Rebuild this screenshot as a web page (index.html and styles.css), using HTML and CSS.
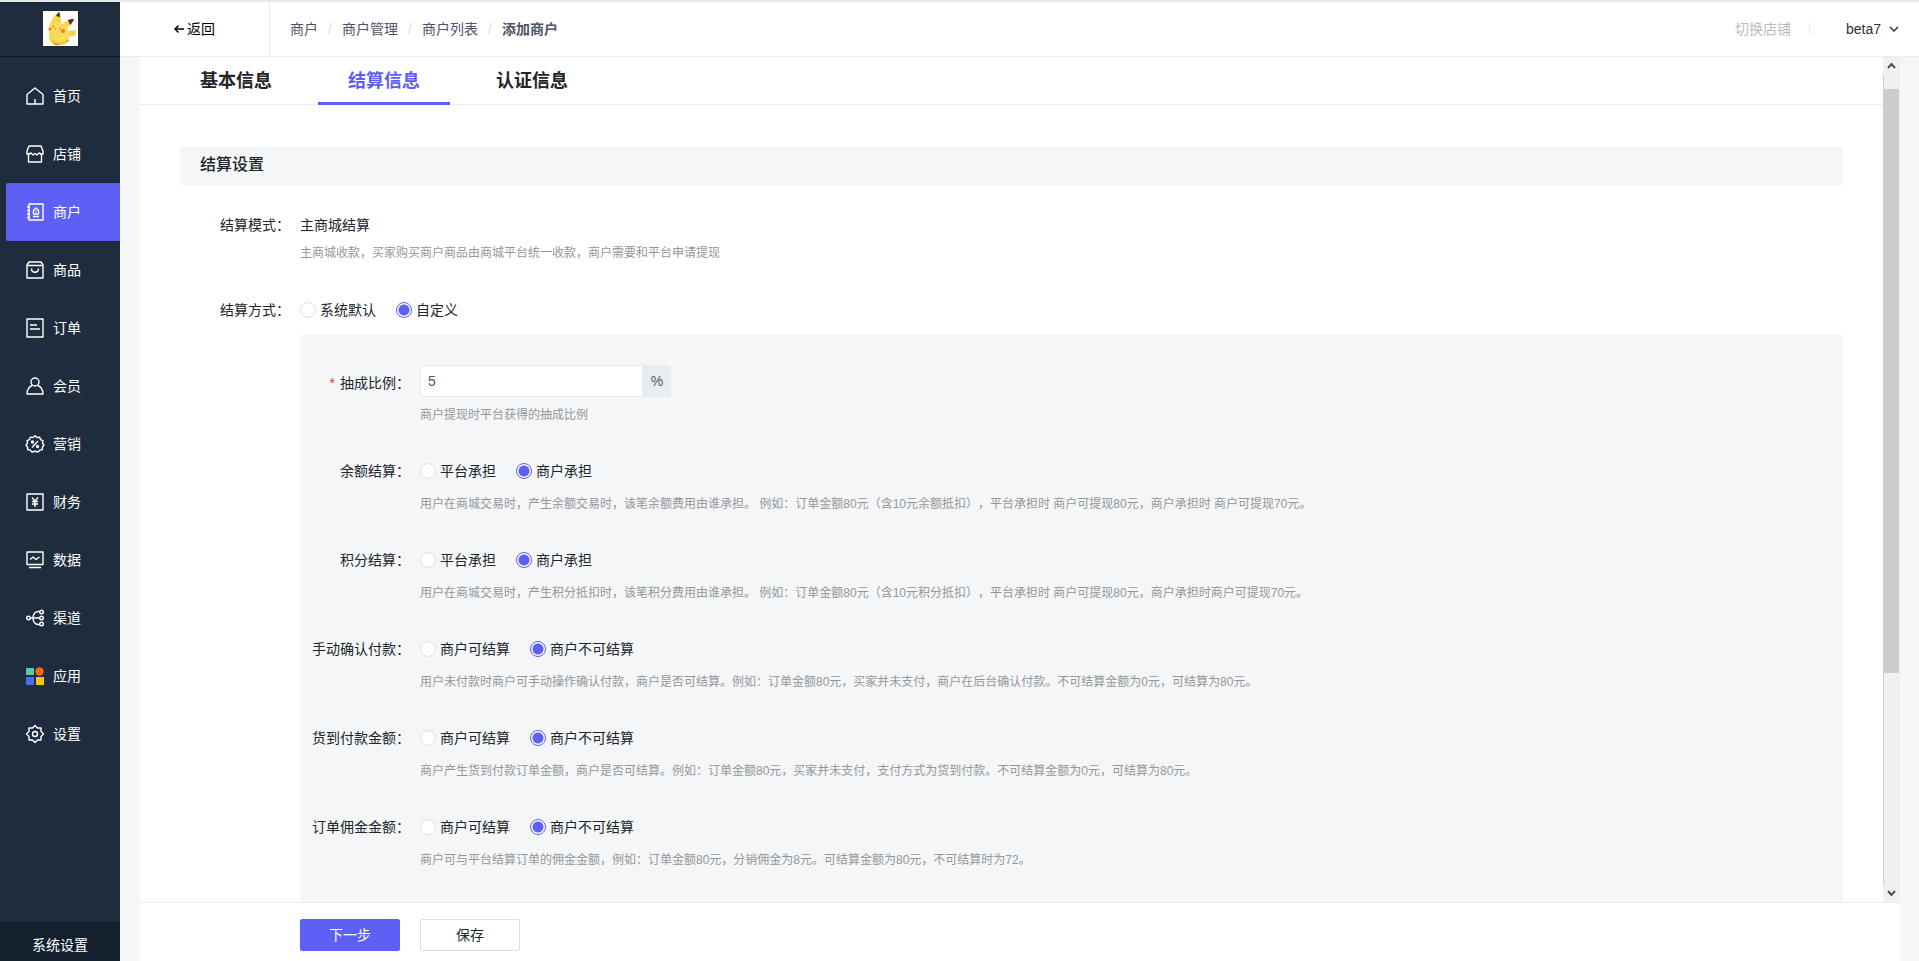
FILE: index.html
```html
<!DOCTYPE html>
<html lang="zh-CN">
<head>
<meta charset="utf-8">
<title>添加商户</title>
<link rel="stylesheet" href="styles.css">
</head>
<body>
<div class="app">
  <aside class="sidebar">
    <div class="logo">
      <svg viewBox="0 0 35 35" width="35" height="35" role="img" aria-label="logo">
        <rect width="35" height="35" fill="#fdfbf3"/>
        <path d="M24 22l4-3 5 1-1 5-6 0z" fill="#f3d34a"/>
        <path d="M7 14C9 8 12 3 16 1c2 4 2 8 2 12z" fill="#f5d54c"/>
        <path d="M13 5C14 3 15 2 16 1c1 2 1 3 1 5z" fill="#4a3026"/>
        <path d="M18 15c3-4 8-7 13-7-2 5-6 9-10 10z" fill="#f5d54c"/>
        <path d="M25 9c2-1 4-1 6-1-1 3-3 5-4 6z" fill="#4a3026"/>
        <path d="M7 14c3-4 9-4 14 0 4 3 6 8 5 13-1 5-6 7-11 7S6 31 6 26c0-3 1-4 0-7-1-2 0-4 1-5z" fill="#f8da55"/>
        <path d="M8 27c3 5 10 6 16 3-1 3-5 4-9 4-4 0-7-2-7-7z" fill="#eebc3c"/>
        <circle cx="7" cy="18" r="1.500" fill="#ec7a3b"/><circle cx="20" cy="20" r="2" fill="#ec7a3b"/>
        <path d="M9 15l2 1M16 17l2 1M12 18h1M11 33l4 1M23 31l3-2" stroke="#b98433" fill="none"/>
      </svg>
    </div>
    <nav class="nav">
      <a class="nav-item" href="#"><svg class="icon" viewBox="0 0 18 18"><path d="M1 7.500 9 1l8 6.500V17H1zM9 12v5"/></svg>首页</a>
      <a class="nav-item" href="#"><svg class="icon" viewBox="0 0 18 18"><path d="M3 1h12l2 5v3h-2l-2-1-2 2-2-1.500L7 10 5 8 3 9H1V6zM2.500 9.500V17h13V9.500"/></svg>店铺</a>
      <a class="nav-item active" href="#"><svg class="icon" viewBox="0 0 18 18"><path d="M3 1h14v16H3zM1 4h3M1 7.500h3M1 11h3M1 14.500h3M7 13.500h6M7.500 11V7.500L10 5l2.500 2.500V11zM9.500 8.500h1"/></svg>商户</a>
      <a class="nav-item" href="#"><svg class="icon" viewBox="0 0 18 18"><path d="M1 4v13h16V4l-2-3H3zM1 4.500h16M5.500 7.500c0 5 7 5 7 0"/></svg>商品</a>
      <a class="nav-item" href="#"><svg class="icon" viewBox="0 0 18 18"><path d="M1 0h16v18H1zM4 6h7M4 10h10"/></svg>订单</a>
      <a class="nav-item" href="#"><svg class="icon" viewBox="0 0 18 18"><circle cx="9" cy="5" r="4"/><path d="M6 8.500C3 10 1 13 1 17h16c0-4-2-7-5-8.500"/></svg>会员</a>
      <a class="nav-item" href="#"><svg class="icon" viewBox="0 0 18 18"><path d="M9 .8l2 1.700 2.600-.4.900 2.500 2.400 1-.4 2.500L18 10l-1.500 2-.1 2.500-2.500.6L12 17l-3-.8L6 17l-1.900-1.900-2.500-.6-.1-2.500L0 10l1.500-1.900-.4-2.500 2.400-1 .9-2.500 2.600.4z"/><path d="M12 6l-6 6.500"/><circle cx="6.500" cy="7" r="1"/><circle cx="11.500" cy="11.500" r="1"/></svg>营销</a>
      <a class="nav-item" href="#"><svg class="icon" viewBox="0 0 18 18"><path d="M1 1h16v16H1zM6 4.500 9 8l3-3.500M9 8v6M6 8.500h6M6 11h6"/></svg>财务</a>
      <a class="nav-item" href="#"><svg class="icon" viewBox="0 0 18 18"><path d="M1 1h16v12.500H1zM4 8.500 7 6l3 2.500L13.500 6M3 16.500h12"/></svg>数据</a>
      <a class="nav-item" href="#"><svg class="icon" viewBox="0 0 18 18"><circle cx="2.500" cy="9" r="1.800"/><circle cx="15.500" cy="3" r="1.800"/><circle cx="15.500" cy="9" r="1.800"/><circle cx="15.500" cy="15" r="1.800"/><path d="M4.300 9h9.400M13.700 2.500C9.500 2 7 5 7 9s2.500 7 6.700 6.500"/></svg>渠道</a>
      <a class="nav-item" href="#"><svg class="icon-apps" viewBox="0 0 18 18"><path fill="#4cd0a4" d="M0 1h8v7H0z"/><circle fill="#f66a0a" cx="13.500" cy="4.500" r="4.200"/><path fill="#4d6bfa" d="M0 10h8v8H0z"/><path fill="#f9c60b" d="M10 10h8v8h-8z"/></svg>应用</a>
      <a class="nav-item" href="#"><svg class="icon" viewBox="0 0 18 18"><path d="M9 .5 11.500 3l3.500 0v3.500L17.500 9 15 11.500V15h-3.500L9 17.500 6.500 15H3v-3.500L.5 9 3 6.500V3h3.500z"/><circle cx="9" cy="9" r="2.500"/></svg>设置</a>
    </nav>
    <a class="system" href="#">系统设置</a>
  </aside>

  <header class="header">
    <a class="back" href="#"><svg width="10" height="10" viewBox="0 0 10 10"><path d="M10 5H1M4.500 1.500 1 5l3.500 3.500"/></svg>返回</a>
    <nav class="crumbs" aria-label="breadcrumb">
      <a href="#">商户</a><span class="sep">/</span><a href="#">商户管理</a><span class="sep">/</span><a href="#">商户列表</a><span class="sep">/</span><b>添加商户</b>
    </nav>
    <div class="account">
      <a class="switch" href="#">切换店铺</a>
      <button class="user" type="button">beta7<svg width="10" height="10" viewBox="0 0 10 10"><path d="M1 3l4 4 4-4"/></svg></button>
    </div>
  </header>

  <main class="main">
    <div class="view">
      <div class="scroll">
        <div class="tabs" role="tablist">
          <button class="tab" role="tab" type="button">基本信息</button>
          <button class="tab selected" role="tab" type="button" aria-selected="true">结算信息</button>
          <button class="tab" role="tab" type="button">认证信息</button>
        </div>
        <form class="form" id="settle">
          <h2 class="title">结算设置</h2>
          <div class="row">
            <span class="label">结算模式：</span>
            <div class="field">
              <div class="line">主商城结算</div>
              <p class="hint tight">主商城收款，买家购买商户商品由商城平台统一收款，商户需要和平台申请提现</p>
            </div>
          </div>
          <div class="row last">
            <span class="label">结算方式：</span>
            <div class="field">
              <div class="line">
                <label class="radio"><input type="radio" name="way">系统默认</label>
                <label class="radio"><input type="radio" name="way" checked>自定义</label>
              </div>
            </div>
          </div>
          <div class="panel">
            <div class="row ratio">
              <label class="label" for="ratio"><span class="star">*</span>抽成比例：</label>
              <div class="field">
                <div class="group"><input class="text" id="ratio" type="text" value="5"><span class="unit">%</span></div>
                <p class="hint">商户提现时平台获得的抽成比例</p>
              </div>
            </div>
            <div class="row">
              <span class="label">余额结算：</span>
              <div class="field">
                <div class="line">
                  <label class="radio"><input type="radio" name="balance">平台承担</label>
                  <label class="radio"><input type="radio" name="balance" checked>商户承担</label>
                </div>
                <p class="hint">用户在商城交易时，产生余额交易时，该笔余额费用由谁承担。 例如：订单金额80元（含10元余额抵扣），平台承担时 商户可提现80元，商户承担时 商户可提现70元。</p>
              </div>
            </div>
            <div class="row">
              <span class="label">积分结算：</span>
              <div class="field">
                <div class="line">
                  <label class="radio"><input type="radio" name="points">平台承担</label>
                  <label class="radio"><input type="radio" name="points" checked>商户承担</label>
                </div>
                <p class="hint">用户在商城交易时，产生积分抵扣时，该笔积分费用由谁承担。 例如：订单金额80元（含10元积分抵扣），平台承担时 商户可提现80元，商户承担时商户可提现70元。</p>
              </div>
            </div>
            <div class="row">
              <span class="label">手动确认付款：</span>
              <div class="field">
                <div class="line">
                  <label class="radio"><input type="radio" name="manual">商户可结算</label>
                  <label class="radio"><input type="radio" name="manual" checked>商户不可结算</label>
                </div>
                <p class="hint">用户未付款时商户可手动操作确认付款，商户是否可结算。例如：订单金额80元，买家并未支付，商户在后台确认付款。不可结算金额为0元，可结算为80元。</p>
              </div>
            </div>
            <div class="row">
              <span class="label">货到付款金额：</span>
              <div class="field">
                <div class="line">
                  <label class="radio"><input type="radio" name="cod">商户可结算</label>
                  <label class="radio"><input type="radio" name="cod" checked>商户不可结算</label>
                </div>
                <p class="hint">商户产生货到付款订单金额，商户是否可结算。例如：订单金额80元，买家并未支付，支付方式为货到付款。不可结算金额为0元，可结算为80元。</p>
              </div>
            </div>
            <div class="row">
              <span class="label">订单佣金金额：</span>
              <div class="field">
                <div class="line">
                  <label class="radio"><input type="radio" name="fee">商户可结算</label>
                  <label class="radio"><input type="radio" name="fee" checked>商户不可结算</label>
                </div>
                <p class="hint">商户可与平台结算订单的佣金金额，例如：订单金额80元，分销佣金为8元。可结算金额为80元，不可结算时为72。</p>
              </div>
            </div>
          </div>
        </form>
      </div>
      <div class="scrollbar" aria-hidden="true">
        <svg class="arrow" viewBox="0 0 17 17"><path d="M5 11l3.500-4 3.500 4"/></svg>
        <div class="track"><div class="thumb"></div></div>
        <svg class="arrow" viewBox="0 0 17 17"><path d="M5 6l3.500 4L12 6"/></svg>
      </div>
    </div>
    <footer class="footer">
      <button class="btn primary" type="submit" form="settle">下一步</button>
      <button class="btn" type="button">保存</button>
    </footer>
  </main>
</div>
</body>
</html>
```
FILE: styles.css
```css
* { box-sizing: border-box; }
body {
  margin: 0;
  font: 14px/20px "Liberation Sans", "Noto Sans CJK SC", sans-serif;
  color: #212529;
  text-spacing-trim: space-all;
}
a { color: inherit; text-decoration: none; }
button, input { font: inherit; color: inherit; }
p, h2 { margin: 0; }

.app {
  display: grid;
  grid-template: 55px minmax(0, 1fr) / 120px minmax(0, 1fr);
  height: 100vh;
  border-top: 2px solid #e6e7e8;
  background: #f4f6f8;
}

.sidebar {
  grid-row: 1 / 3;
  display: flex;
  flex-direction: column;
  min-height: 0;
  background: #1f2c3d;
  color: #fff;
}
.logo {
  display: flex;
  justify-content: center;
  flex: none;
  height: 55px;
  padding-top: 9px;
  border-bottom: 1px solid #0e1826;
}
.nav { flex: 1; padding: 10px 0 0 6px; }
.nav-item {
  display: flex;
  align-items: center;
  gap: 9px;
  height: 58px;
  padding: 0 0 1px 20px;
  border-radius: 2px 0 0 2px;
}
.nav-item.active { background: #5e60f5; }
.icon, .icon-apps { width: 18px; height: 18px; overflow: visible; }
.icon { fill: none; stroke: #fff; stroke-width: 1.4; stroke-linejoin: round; }
.system {
  height: 39px;
  padding-top: 13px;
  background: #14202e;
  text-align: center;
}

.header {
  display: flex;
  align-items: center;
  background: #fff;
  border-bottom: 1px solid #ebedf0;
}
.header svg { fill: none; stroke: currentColor; stroke-width: 1.5; }
.back {
  display: flex;
  align-items: center;
  align-self: stretch;
  justify-content: center;
  gap: 3px;
  width: 150px;
  border-right: 1px solid #ebedf0;
  color: #000;
}
.crumbs { display: flex; padding-left: 20px; color: #4d5566; }
.sep { width: 24px; text-align: center; color: #dcdfe6; }
.account { display: flex; align-items: center; margin-left: auto; padding-right: 20px; }
.switch { color: #bbb; padding-right: 18px; line-height: 12px; border-right: 1px solid #ebedf0; }
.user {
  display: flex;
  align-items: center;
  gap: 8px;
  padding: 0 0 0 36px;
  border: 0;
  background: none;
  color: #263245;
}

.main {
  display: flex;
  flex-direction: column;
  min-height: 0;
  margin: 0 19px 0 20px;
  background: #fff;
}
.view { display: flex; flex: 1; min-height: 0; }
.scroll { flex: 1; min-width: 0; overflow: auto; scrollbar-width: none; }
.tabs {
  display: flex;
  gap: 16px;
  height: 48px;
  padding-left: 30px;
  border-bottom: 1px solid #ebedf0;
}
.tab {
  height: 48px;
  padding: 3px 30px 0;
  border: 0;
  border-bottom: 3px solid transparent;
  background: none;
  font-size: 18px;
  font-weight: 700;
}
.tab.selected { color: #5e60f5; border-color: #5e60f5; }

.form { padding: 41px 40px 0; }
.title {
  height: 39px;
  margin-bottom: 24px;
  padding-left: 20px;
  border-radius: 3px;
  background: #f4f6f8;
  font-size: 16px;
  font-weight: 500;
  line-height: 38px;
}
.row { display: flex; gap: 10px; margin-bottom: 34px; line-height: 32px; }
.row.last { margin-bottom: 9px; }
.label { flex: none; width: 110px; text-align: right; white-space: nowrap; }
.ratio .label { line-height: 36px; }
.field { flex: 1; min-width: 0; }
.line { display: flex; gap: 20px; height: 32px; }
.hint { padding-top: 10px; color: #939799; font-size: 12px; line-height: 14px; }
.hint.tight { padding-top: 5px; }
.ratio .hint { padding-top: 11px; }
.radio { display: flex; align-items: center; gap: 4px; }
.radio input {
  appearance: none;
  width: 16px;
  height: 16px;
  margin: 0;
  border: 1px solid #dfe1e4;
  border-radius: 50%;
  background: #fff;
}
.radio input:checked {
  border-color: #5e60f5;
  background: radial-gradient(circle, #5e60f5 5px, #fff 6px);
}

.panel { min-height: 600px; margin-left: 120px; padding-top: 30px; background: #f4f6f8; }
.panel .row { margin-bottom: 33px; }
.star { margin-right: 5px; color: #e0401b; }
.group { display: flex; width: 251px; height: 32px; }
.text {
  flex: 1;
  min-width: 0;
  padding: 0 7px;
  border: 1px solid #e6e9ec;
  border-radius: 2px 0 0 2px;
  background: #fff;
  color: #555;
}
.unit { width: 28px; background: #e9edef; color: #555; text-align: center; }

.scrollbar { display: flex; flex-direction: column; width: 17px; background: #f0f0f0; }
.arrow { flex: none; width: 17px; height: 17px; fill: none; stroke: #505050; stroke-width: 2; }
.track {
  display: grid;
  grid-template-rows: 11fr 4fr;
  flex: 1;
  padding-top: 15px;
  border-left: 1px solid #cdcdcd;
}
.thumb { margin-right: 1px; background: #cdcdcd; }

.footer {
  display: flex;
  gap: 20px;
  flex: none;
  height: 59px;
  padding: 16px 0 0 160px;
  border-top: 1px solid #ebedf0;
}
.btn {
  width: 100px;
  height: 32px;
  border: 1px solid #dcdfe2;
  border-radius: 2px;
  background: #fff;
}
.btn.primary { border-color: #5e60f5; background: #5e60f5; color: #fff; }
```
